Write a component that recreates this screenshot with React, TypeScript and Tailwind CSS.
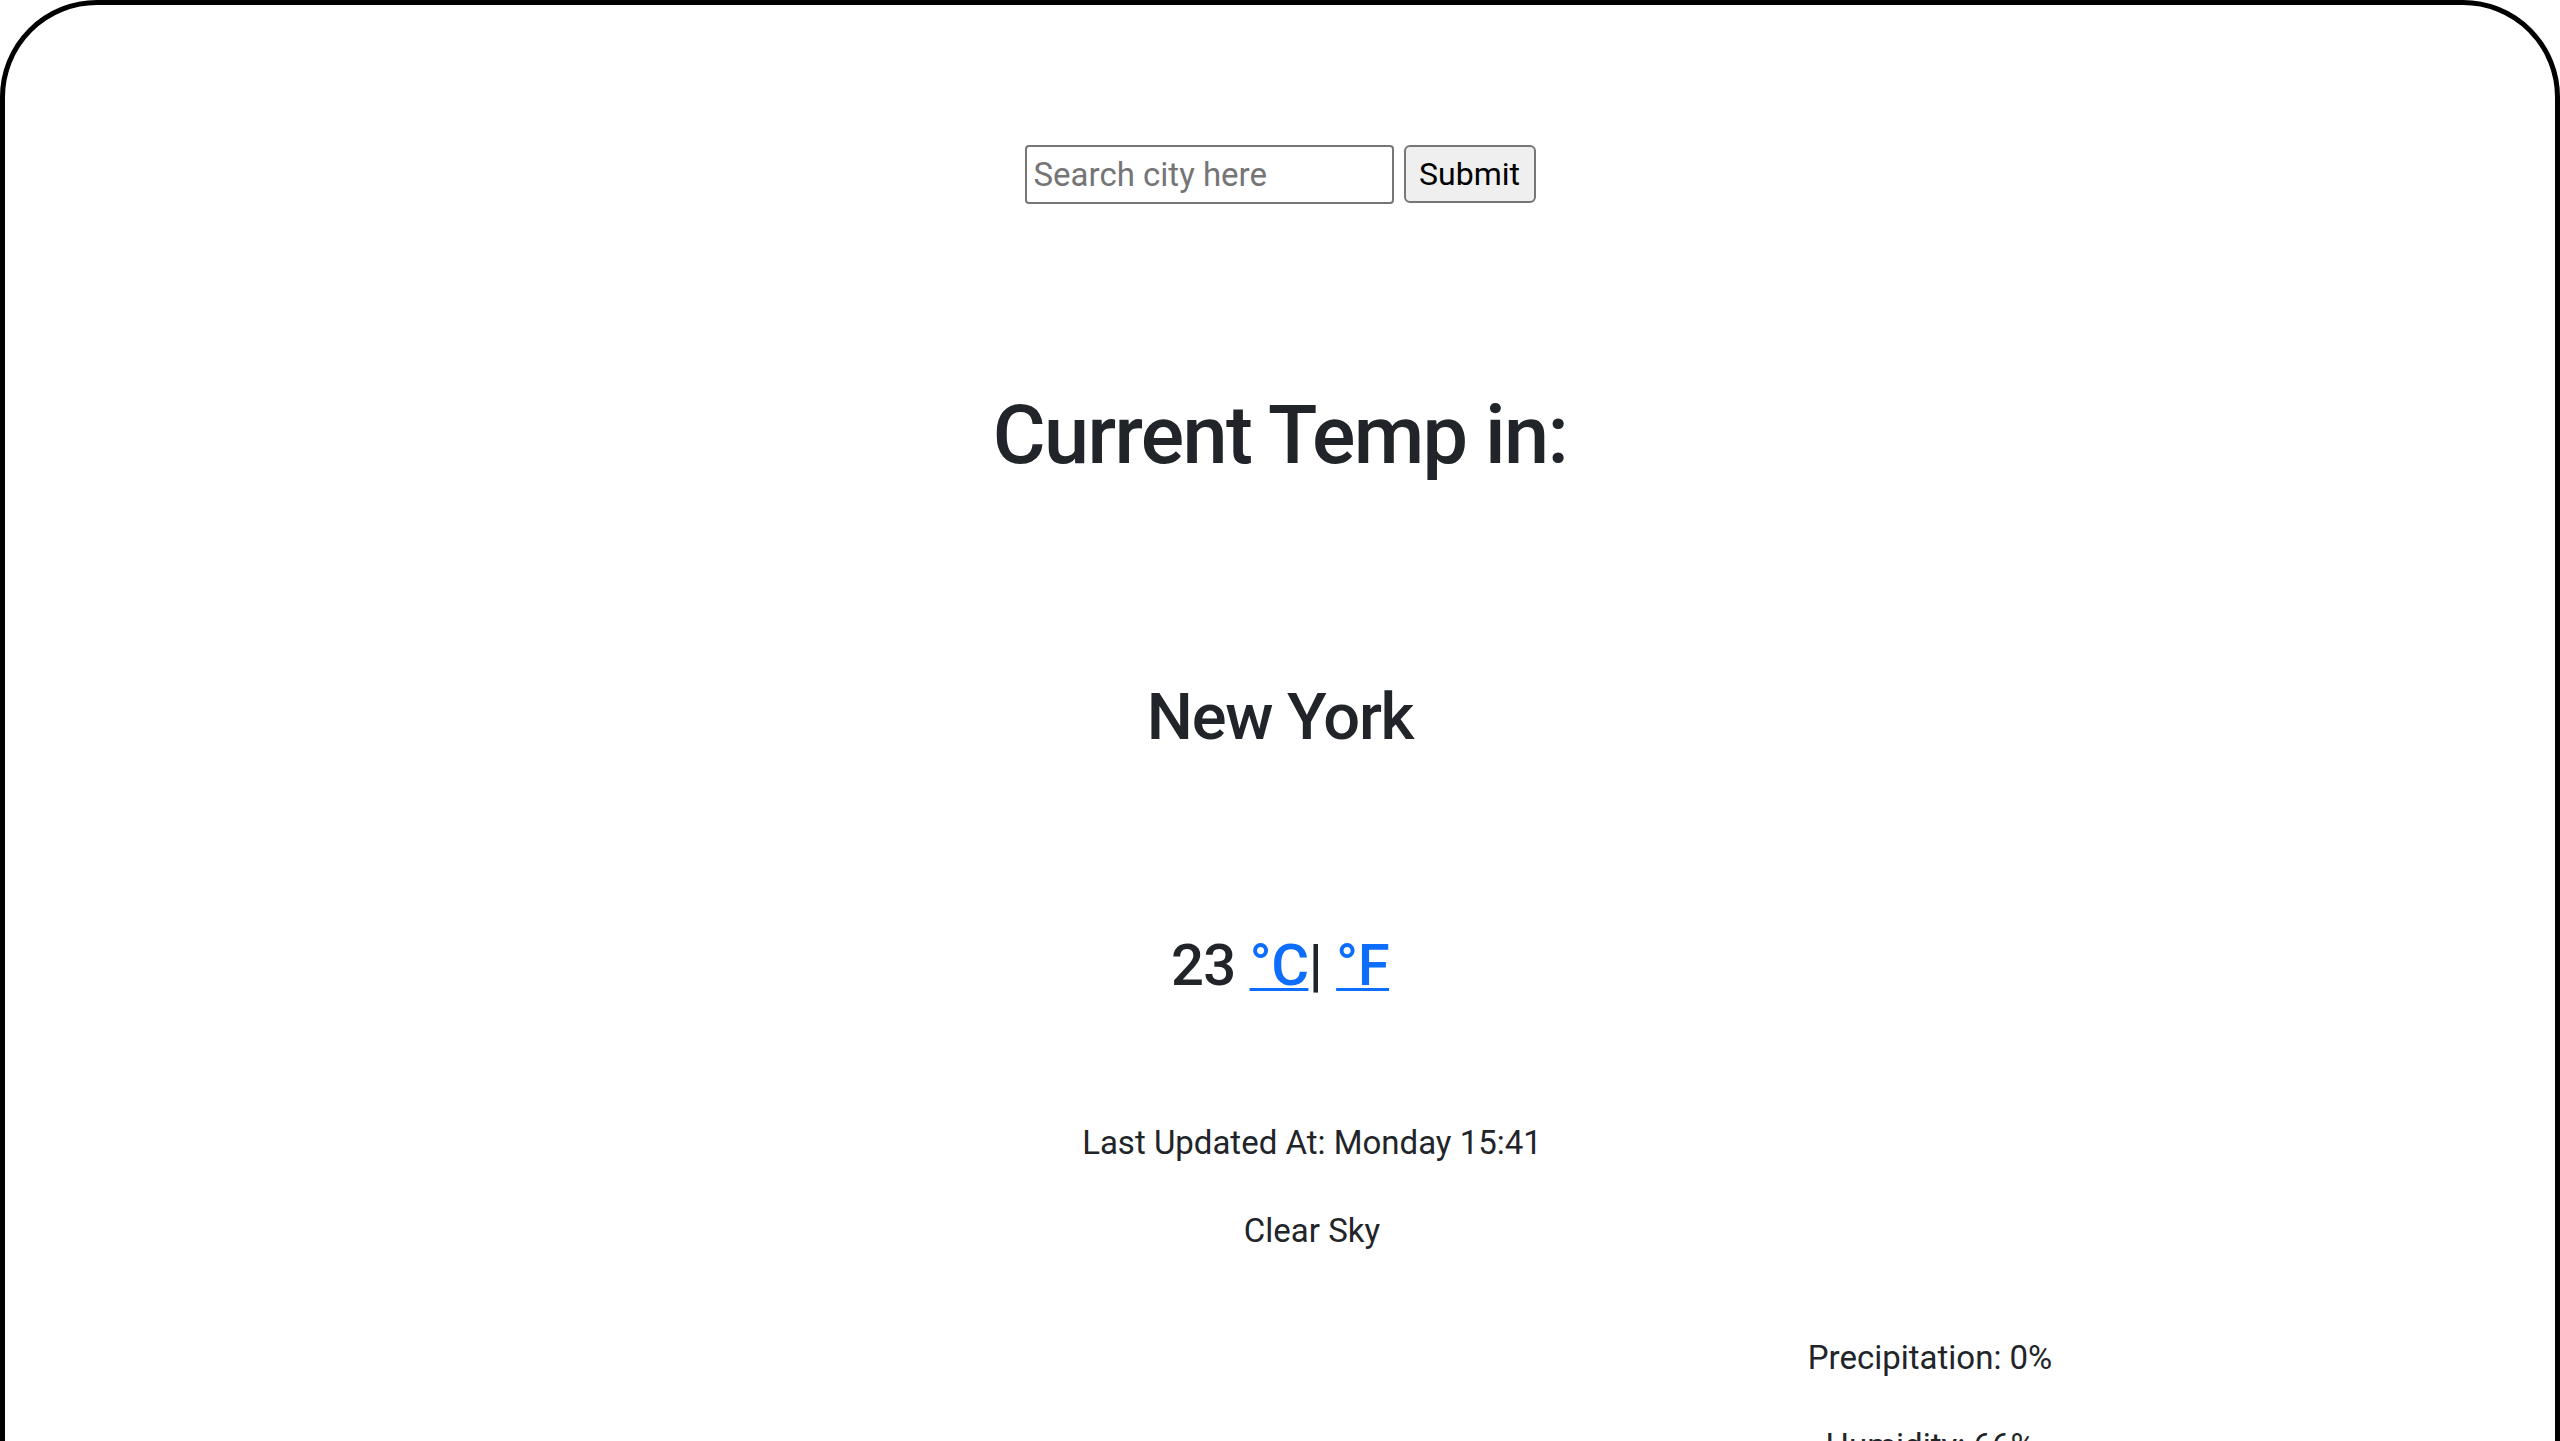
import React from "react"

export default function App() {
  return (
    <div className="h-screen overflow-hidden bg-white">
      <div className="min-h-[1700px] rounded-[97px] border-[5px] border-black pt-[140px] text-[#212529] font-['Roboto','Liberation_Sans',sans-serif]">
        {/* Search */}
        <form className="flex justify-center gap-[10px]" onSubmit={(e) => e.preventDefault()}>
          <input
            type="text"
            placeholder="Search city here"
            className="h-[59px] w-[369px] rounded-[4px] border-2 border-[#767676] bg-white pl-[7px] text-[33px] text-black placeholder:text-[#757575] outline-none"
          />
          <button
            type="submit"
            className="h-[58px] w-[132px] rounded-[6px] border-2 border-[#767676] bg-[#efefef] text-[32px] text-black"
          >
            Submit
          </button>
        </form>

        <h1 className="mt-[183px] text-center text-[81px] leading-[97px] font-medium tracking-[-0.02em]">
          Current Temp in:
        </h1>

        <h2 className="mt-[194px] text-center text-[65px] leading-[78px] font-medium tracking-[-0.02em]">
          New York
        </h2>

        <h3 className="mt-[174px] text-center text-[58px] leading-[70px] font-medium tracking-[-0.01em]">
          23{" "}
          <a href="#" className="text-[#0d6efd] underline decoration-[3px] underline-offset-[3px]">
            °C
          </a>
          |{" "}
          <a href="#" className="text-[#0d6efd] underline decoration-[3px] underline-offset-[3px]">
            °F
          </a>
        </h3>

        {/* Details */}
        <ul className="mt-[118px] flex flex-col gap-[38px] pl-[64px] text-center text-[33px] leading-[50px]">
          <li>Last Updated At: Monday 15:41</li>
          <li>Clear Sky</li>
        </ul>

        <div className="mt-[77px] grid grid-cols-2 px-[39px]">
          <div />
          <ul className="flex flex-col gap-[38px] pl-[64px] text-center text-[33px] leading-[50px]">
            <li>Precipitation: 0%</li>
            <li>Humidity: 66%</li>
            <li>Wind: 3 km/h</li>
          </ul>
        </div>
      </div>
    </div>
  )
}
